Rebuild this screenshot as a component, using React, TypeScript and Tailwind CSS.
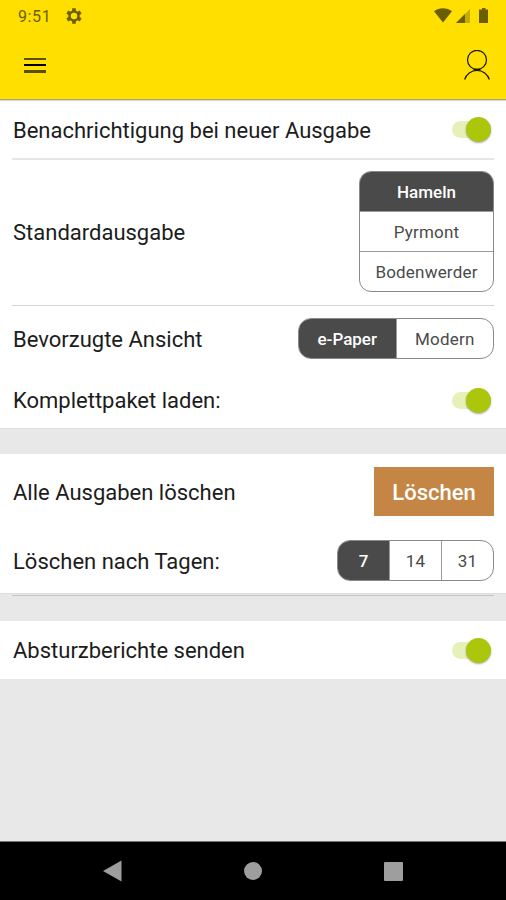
import { useState } from "react";
import type { ReactNode } from "react";
import { clsx } from "clsx";

function StatusBar() {
  return (
    <div className="flex h-8 items-center justify-between pl-[18px] pr-4 text-[#6b5e00]">
      <div className="flex items-center gap-[15px]">
        <span className="pt-px text-base leading-8 tracking-[0.6px]">9:51</span>
        <svg width="16" height="16" viewBox="0 0 16 16" fill="none" stroke="currentColor">
          <circle cx="8" cy="8" r="4.5" strokeWidth="2.4" />
          <path
            d="M8 0.3v2.8M8 12.9v2.8M1.3 4.15l2.5 1.45M12.2 10.4l2.5 1.45M1.3 11.85l2.5-1.45M12.2 5.6l2.5-1.45"
            strokeWidth="3.6"
          />
        </svg>
      </div>
      <svg width="56" height="16" viewBox="0 0 56 16" fill="currentColor">
        <path d="M0 3.2C5-.8 13-.8 18 3.2L9 14.5z" />
        <path d="M36 1v14H22z" opacity="0.4" />
        <path d="M31 6v9h-9z" />
        <path d="M48 0h3.5v1.5H54V15h-9V1.5h3z" />
      </svg>
    </div>
  );
}

function Header() {
  return (
    <header className="relative h-[100px] border-b border-[#aaa278] bg-[#ffdf00] shadow-[0_1px_1px_rgba(0,0,0,0.15)]">
      <StatusBar />
      <div className="flex h-[66px] items-center justify-between pl-6 pr-4">
        <button aria-label="Menü" className="flex flex-col gap-1">
          <span className="h-[2.5px] w-[22px] bg-[#5c5000]" />
          <span className="h-[2px] w-[22px] bg-black" />
          <span className="h-[2.5px] w-[22px] bg-[#5c5000]" />
        </button>
        <button aria-label="Profil">
          <svg width="26" height="31" viewBox="0 0 26 31" fill="none" stroke="#1a1700" strokeWidth="1.2">
            <circle cx="13" cy="9.9" r="9.5" />
            <path d="M0.6 29.5A13 13 0 0 1 25.4 29.5" />
            <path d="M9.5 19.6h7" strokeWidth="1.6" />
          </svg>
        </button>
      </div>
    </header>
  );
}

interface SwitchProps {
  label: string;
}

function Switch({ label }: SwitchProps) {
  const [on, setOn] = useState(true);

  return (
    <button
      role="switch"
      aria-label={label}
      aria-checked={on}
      onClick={() => setOn(!on)}
      className={clsx(
        "mr-[3.5px] flex h-[17px] w-[39px] items-center rounded-full",
        on ? "justify-end bg-[#e6f0b9]" : "justify-start bg-gray-300"
      )}
    >
      <span
        className={clsx(
          "h-[25px] w-[25px] shrink-0 rounded-full shadow-[0_1px_2px_rgba(0,0,0,0.35)]",
          on ? "bg-[#abc60b]" : "bg-gray-100"
        )}
      />
    </button>
  );
}

interface SegmentedProps {
  options: string[];
  vertical?: boolean;
  className?: string;
}

function Segmented({ options, vertical, className }: SegmentedProps) {
  const [active, setActive] = useState(options[0]);

  return (
    <div
      className={clsx(
        "flex overflow-hidden border border-[#8a8a8a] text-[17px] tracking-[0.2px]",
        vertical ? "flex-col divide-y divide-[#9a9a9a]" : "divide-x divide-[#9a9a9a]",
        className
      )}
    >
      {options.map((option) => (
        <button
          key={option}
          onClick={() => setActive(option)}
          className={clsx(
            "min-h-0 min-w-0 flex-1 pt-0.5",
            option === active ? "bg-[#4a4a4a] font-medium tracking-normal text-white" : "text-[#4a4a4a]"
          )}
        >
          {option}
        </button>
      ))}
    </div>
  );
}

interface RowProps {
  label: string;
  className: string;
  children: ReactNode;
}

function Row({ label, className, children }: RowProps) {
  return (
    <div className={clsx("flex items-center justify-between pl-[13px] pr-3", className)}>
      <span className="pt-px text-[22px] text-[#1c1c1c]">{label}</span>
      {children}
    </div>
  );
}

function NavigationBar() {
  return (
    <nav className="flex h-[59px] items-center justify-between border-t border-[#777] bg-black px-[103px]">
      <svg width="19" height="22" viewBox="0 0 19 22" fill="#9e9e9e">
        <path d="M18.5 0.5v21L0 11z" />
      </svg>
      <span className="h-[18px] w-[18px] rounded-full bg-[#9e9e9e]" />
      <span className="h-[19px] w-[19px] rounded-[1px] bg-[#9e9e9e]" />
    </nav>
  );
}

export default function App() {
  return (
    <div className="flex h-[900px] w-[506px] flex-col overflow-hidden bg-[#e8e8e8] font-[Roboto,sans-serif]">
      <Header />
      <main className="flex-1">
        <section className="border-b border-[#dedede] bg-white">
          <Row label="Benachrichtigung bei neuer Ausgabe" className="h-[58px] pt-px">
            <Switch label="Benachrichtigung" />
          </Row>
          <div className="mx-3 h-[2px] bg-[#e6e6e6]" />
          <Row label="Standardausgabe" className="h-[145px] pb-0.5">
            <Segmented options={["Hameln", "Pyrmont", "Bodenwerder"]} vertical className="h-[121px] w-[135px] rounded-xl" />
          </Row>
          <div className="mx-3 h-px bg-[#d4d4d4]" />
          <Row label="Bevorzugte Ansicht" className="h-[65px]">
            <Segmented options={["e-Paper", "Modern"]} className="h-[41px] w-[196px] rounded-[13px]" />
          </Row>
          <Row label="Komplettpaket laden:" className="h-[57px] pt-px">
            <Switch label="Komplettpaket laden" />
          </Row>
        </section>
        <section className="mt-[25px] bg-white pt-[13px]">
          <Row label="Alle Ausgaben löschen" className="h-[49px]">
            <button className="h-[49px] w-[120px] bg-[#c58544] pt-0.5 text-[22px] font-medium text-white">
              Löschen
            </button>
          </Row>
          <Row label="Löschen nach Tagen:" className="h-[77px] pt-3">
            <Segmented options={["7", "14", "31"]} className="h-[41px] w-[157px] rounded-[13px]" />
          </Row>
        </section>
        <div className="h-[28px] border-t border-[#dcdcdc]">
          <div className="mx-3 mt-px h-px bg-[#c4c4c4]" />
        </div>
        <section className="bg-white">
          <Row label="Absturzberichte senden" className="h-[58px]">
            <Switch label="Absturzberichte senden" />
          </Row>
        </section>
      </main>
      <NavigationBar />
    </div>
  );
}
